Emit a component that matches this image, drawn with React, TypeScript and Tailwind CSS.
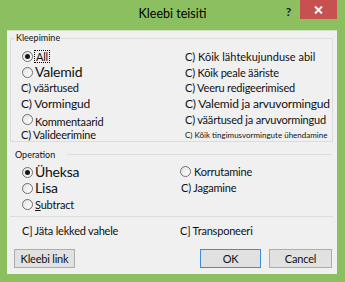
import React from "react";

const Radio = ({ checked }: { checked?: boolean }) => (
  <span className="inline-flex w-[11px] h-[11px] shrink-0 items-center justify-center rounded-full border border-[#6f6f6f] bg-linear-to-br from-[#e2e2e2] to-white">
    {checked && <span className="w-[5px] h-[5px] rounded-full bg-[#151515]" />}
  </span>
);

const Row = ({ children, className = "" }: { children: React.ReactNode; className?: string }) => (
  <div className={`flex items-center h-[15.6px] leading-none whitespace-nowrap ${className}`}>{children}</div>
);

const OpRow = ({ children, className = "" }: { children: React.ReactNode; className?: string }) => (
  <div className={`flex items-center h-4 leading-none whitespace-nowrap ${className}`}>{children}</div>
);

const App = () => {
  return (
    <div className="w-[345px] h-[282px] bg-[#8bbf60] flex flex-col font-[family-name:Lato,sans-serif] tracking-[-0.2px] text-[#111] overflow-hidden">
      {/* title bar */}
      <div className="h-[30px] grid grid-cols-[1fr_auto_1fr] shrink-0">
        <div />
        <div className="flex items-center text-[12.5px] tracking-normal text-black leading-none pb-[1px]">Kleebi teisiti</div>
        <div className="flex justify-end items-start">
          <span className="mt-[6px] mr-[9px] text-[12px] font-bold leading-none text-[#1b1b1b]">?</span>
          <div className="w-[37px] h-[19px] mr-[8px] bg-[#c75050] flex items-center justify-center">
            <svg width="9" height="8" viewBox="0 0 9 8">
              <path d="M1 0.5 L8 7.5 M8 0.5 L1 7.5" stroke="white" strokeWidth="2" />
            </svg>
          </div>
        </div>
      </div>

      {/* content */}
      <div className="mx-[7px] mr-[8px] h-[244px] bg-[#f0f0f0] border-t border-[#cfe0c0] flex flex-col">
        {/* Kleepimine group */}
        <div className="relative mt-[7px] ml-[3px] w-[323px] h-[104px] border border-[#dcdcdc] pt-[10px] pl-[11px]">
          <span className="absolute -top-[7px] left-[4px] bg-[#f0f0f0] px-px text-[9px] tracking-normal leading-[12px]">
            Kleepimine
          </span>
          <div className="grid grid-cols-[158px_1fr]">
            <div className="flex flex-col text-[11px]">
              <Row>
                <Radio checked />
                <span className="ml-[1px] border border-dotted border-black leading-[11px] px-px">All</span>
              </Row>
              <Row>
                <Radio />
                <span className="ml-[2px] text-[14px]">Valemid</span>
              </Row>
              <Row className="-ml-px">C) väärtused</Row>
              <Row className="-ml-px text-[12px]">C) Vormingud</Row>
              <Row>
                <Radio />
                <span className="ml-[2px] mt-[4px]">Kommentaarid</span>
              </Row>
              <Row className="-ml-px">C) Valideerimine</Row>
            </div>
            <div className="flex flex-col pl-[5px] text-[11px]">
              <Row className="tracking-normal">C) Kõik lähtekujunduse abil</Row>
              <Row>C) Kõik peale ääriste</Row>
              <Row>C) Veeru redigeerimised</Row>
              <Row className="text-[12px]">C) Valemid ja arvuvormingud</Row>
              <Row>C) väärtused ja arvuvormingud</Row>
              <Row className="text-[8px] tracking-normal">C) Kõik tingimusvormingute ühendamine</Row>
            </div>
          </div>
        </div>

        {/* Operation */}
        <div className="mt-[6px] ml-[8px] mr-[5px] h-[12px] flex items-center">
          <span className="text-[9px] tracking-normal leading-none">Operation</span>
          <div className="ml-[12px] flex-1 h-px bg-[#dcdcdc]" />
        </div>
        <div className="mt-[4px] pl-[15px] grid grid-cols-[158px_1fr]">
          <div className="flex flex-col">
            <OpRow>
              <Radio checked />
              <span className="ml-[2px] text-[14px]">Üheksa</span>
            </OpRow>
            <OpRow>
              <Radio />
              <span className="ml-[2px] text-[14px]">Lisa</span>
            </OpRow>
            <OpRow className="text-[11px]">
              <Radio />
              <span className="ml-[2px]">
                <span className="underline">S</span>ubtract
              </span>
            </OpRow>
          </div>
          <div className="flex flex-col text-[11px]">
            <OpRow className="-mt-px">
              <Radio />
              <span className="ml-[3px]">Korrutamine</span>
            </OpRow>
            <OpRow className="ml-px">C) Jagamine</OpRow>
          </div>
        </div>
        <div className="mt-[4px] ml-[3px] w-[323px] h-px bg-[#dcdcdc]" />

        <div className="mt-[5px] pl-[15px] grid grid-cols-[158px_1fr] text-[11px]">
          <OpRow>C] Jäta lekked vahele</OpRow>
          <OpRow>C] Transponeeri</OpRow>
        </div>

        {/* buttons */}
        <div className="mt-[11px] pl-[7px] pr-[5px] flex items-start text-[11px]">
          <button className="w-[61px] h-[19px] bg-[#e1e1e1] border border-[#adadad] flex items-center justify-center leading-none">
            Kleebi link
          </button>
          <div className="flex-1" />
          <button className="w-[61px] h-[19px] bg-[#e1e1e1] border border-[#3c8ddb] flex items-center justify-center leading-none">
            OK
          </button>
          <button className="ml-[8px] w-[63px] h-[19px] bg-[#e1e1e1] border border-[#adadad] flex items-center justify-center leading-none">
            Cancel
          </button>
        </div>
      </div>
    </div>
  );
};

export default App;
